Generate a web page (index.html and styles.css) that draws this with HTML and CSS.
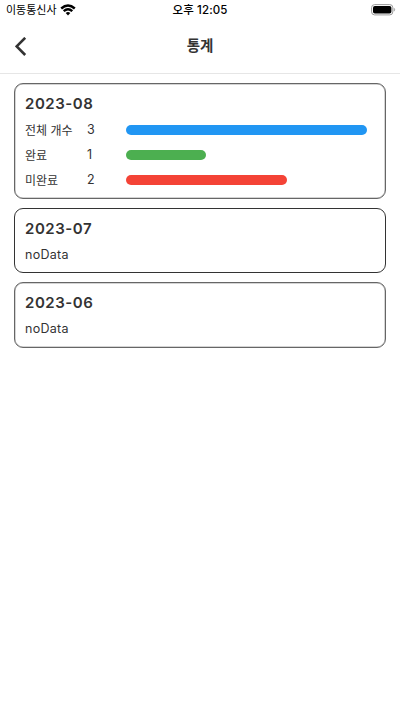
FILE: index.html
```html
<!DOCTYPE html>
<html lang="ko">
<head>
<meta charset="utf-8">
<title>통계</title>
<link rel="stylesheet" href="styles.css">
</head>
<body>
<div class="status">
  <div class="carrier"><span>이동통신사</span>
    <svg class="wifi" width="16" height="12" viewBox="0 0 16 12" fill="none" stroke="#000" stroke-width="2.4"><path d="M1.2 4.5Q8-1.7 14.8 4.5M3.7 7.1Q8 3.3 12.3 7.1"/><path d="M5.7 9.1Q8 7.1 10.3 9.1L8 11.4Z" fill="#000" stroke="none"/></svg>
  </div>
  <div class="time">오후 12:05</div>
  <svg class="battery" width="25" height="12" viewBox="0 0 25 12"><rect x=".6" y=".6" width="21.2" height="10.3" rx="3" fill="none" stroke="#999"/><rect x="2" y="2" width="18.4" height="7.5" rx="1.8"/><path d="M23.1 4.2Q24.4 5.7 23.1 7.2Z" fill="#999" stroke="#999" stroke-width=".5"/></svg>
</div>
<header class="bar">
  <svg class="back" width="12" height="20" viewBox="0 0 12 20" fill="none" stroke="#333" stroke-width="2.6"><path d="M10.2 .8 1.7 9.4l8.5 8.6"/></svg>
  <h1>통계</h1>
</header>
<main class="list">
  <section class="card soft">
    <h2>2023-08</h2>
    <div class="row"><span class="label">전체 개수</span><span class="count">3</span><div class="track"><div class="fill total" style="width:100%"></div></div></div>
    <div class="row"><span class="label">완료</span><span class="count">1</span><div class="track"><div class="fill done" style="width:33.33%"></div></div></div>
    <div class="row"><span class="label">미완료</span><span class="count">2</span><div class="track"><div class="fill open" style="width:66.67%"></div></div></div>
  </section>
  <section class="card">
    <h2>2023-07</h2>
    <p>noData</p>
  </section>
  <section class="card soft">
    <h2>2023-06</h2>
    <p>noData</p>
  </section>
</main>
</body>
</html>
```

FILE: styles.css
```css
* { box-sizing: border-box; margin: 0; }
body {
  background: #fff;
  color: #333;
  font-family: Inter, "Noto Sans CJK KR", sans-serif;
}
.status {
  display: grid;
  grid-template-columns: 1fr auto 1fr;
  align-items: center;
  height: 20px;
  padding: 0 4px 0 6px;
  color: #000;
  font-size: 11px;
  line-height: 20px;
}
.carrier { display: flex; align-items: center; gap: 3px; }
.time { font-weight: 500; font-size: 11.5px; letter-spacing: .1px; margin-right: 2px; }
.battery { justify-self: end; }
.bar {
  display: grid;
  grid-template-columns: 1fr auto 1fr;
  align-items: center;
  height: 54px;
  padding: 0 15px;
  border-bottom: 1px solid #e6e6e6;
}
.bar h1 { font-size: 14.5px; line-height: 20px; font-weight: 700; margin: -2px 0 0 0; }
.list {
  display: flex;
  flex-direction: column;
  gap: 9px;
  padding: 9px 14px;
}
.card {
  height: 65px;
  border: 1px solid #333;
  border-radius: 9px;
  padding: 10px;
}
.soft { height: 66px; border-color: #666; box-shadow: inset 0 0 0 .5px #aaa; }
.soft:first-child { height: 116px; }
.card h2 {
  font-size: 15px;
  line-height: 20px;
  font-weight: 600;
  letter-spacing: .55px;
}
.card p { font-size: 12.5px; line-height: 16px; margin-top: 8px; letter-spacing: .3px; }
.row {
  display: flex;
  align-items: center;
  height: 25px;
  font-size: 12px;
}
.card h2 + .row { margin-top: 3px; }
.label { width: 62px; }
.count { width: 38.6px; font-size: 12.5px; }
.track { width: 241.6px; }
.fill { height: 10px; border-radius: 5px; }
.total { background: #2196f3; }
.done { background: #4caf50; }
.open { background: #f44336; }
```
